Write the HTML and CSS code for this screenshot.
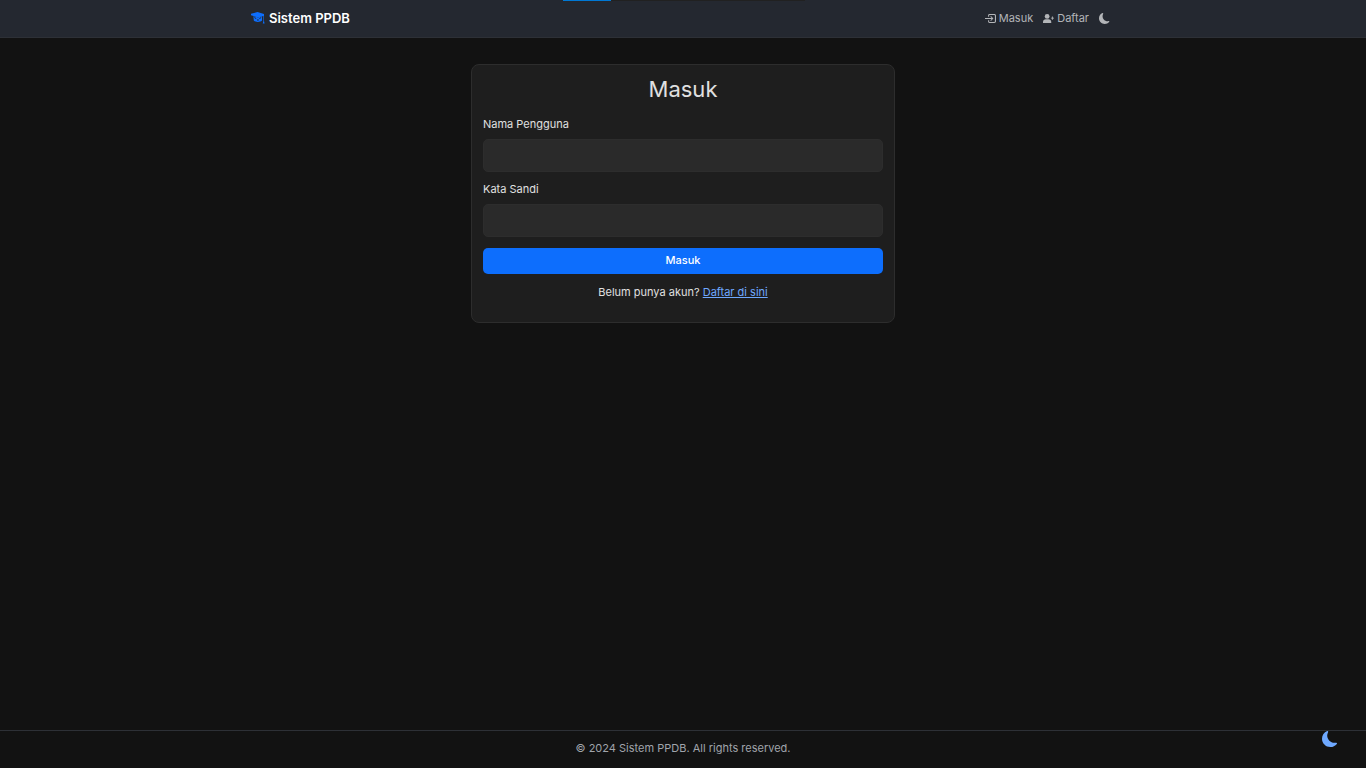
FILE: index.html
```html
<!DOCTYPE html>
<html lang="id">
<head>
<meta charset="utf-8">
<meta name="viewport" content="width=device-width, initial-scale=1">
<title>Masuk - Sistem PPDB</title>
<link rel="stylesheet" href="styles.css">
</head>
<body>
<div class="progress"><div class="progress-bar"></div></div>
<header class="navbar">
  <div class="container">
    <a class="brand" href="#">
      <svg class="brand-icon" viewBox="0 0 14 12" aria-hidden="true"><path d="M6.500 0 13 2V9l.6 2.500h-1.800L12.400 9V4L7 5.500 0 3.200V1.800Z"/><path d="M2.400 4.200 7 5.500l4-1.300v4.400C10 9.600 8.500 10 6.800 10S3.400 9.600 2.800 8.600Z"/><path class="cut" d="M3.400 5.600 5.200 6.500M10.200 5.600 8.400 6.500M6 8h1.800"/></svg>
      <span>Sistem PPDB</span>
    </a>
    <nav class="nav">
      <a class="nav-link" href="#">
        <svg class="nav-icon" viewBox="0 0 16 16" aria-hidden="true"><path d="M6 3.500a.5.5 0 0 1 .5-.5h7a.9.900 0 0 1 .9.900v8.200a.9.900 0 0 1-.9.900h-7a.5.5 0 0 1-.5-.5v-2H4.500v2c0 1 .9 2 2 2h7c1.500 0 2.500-1.100 2.500-2.500V4C16 2.500 15 1.500 13.500 1.500h-7c-1.100 0-2 .9-2 2v2H6Z"/><path d="M11.900 8.400a.5.5 0 0 0 0-.8L8.700 4.300l-1 1 2 2H0v1.400h9.700l-2 2 1 1Z"/></svg>
        <span>Masuk</span>
      </a>
      <a class="nav-link" href="#">
        <svg class="nav-icon" viewBox="0 0 16 16" aria-hidden="true"><path d="M0 14.500v-1.500c0-2.500 1.800-4 4-4h4c2.200 0 4 1.500 4 4v1.500Z"/><circle cx="6" cy="5" r="3.500"/><path d="M13 5.200h1.300v1.600H16v1.300h-1.700v1.700H13V8.100h-1.500V6.800H13Z"/></svg>
        <span>Daftar</span>
      </a>
      <button class="icon-button" type="button" aria-label="Ganti tema">
        <svg class="nav-icon" viewBox="0 0 16 16" aria-hidden="true"><path d="M6 .278a.77.770 0 0 1 .08.858 7.200 7.200 0 0 0-.878 3.460c0 4.021 3.278 7.277 7.318 7.277q.792-.001 1.533-.16a.79.790 0 0 1 .81.316.73.730 0 0 1-.031.893A8.350 8.350 0 0 1 8.344 16C3.734 16 0 12.286 0 7.710 0 4.266 2.114 1.312 5.124.060A.75.750 0 0 1 6 .278"/></svg>
      </button>
    </nav>
  </div>
</header>
<main class="main">
  <section class="card">
    <h1 class="title">Masuk</h1>
    <form class="form">
      <label class="label" for="username">Nama Pengguna</label>
      <input class="input" id="username" name="username" type="text">
      <label class="label" for="password">Kata Sandi</label>
      <input class="input" id="password" name="password" type="password">
      <button class="submit" type="submit">Masuk</button>
    </form>
    <p class="register">Belum punya akun? <a class="link" href="#">Daftar di sini</a></p>
  </section>
</main>
<footer class="footer">© 2024 Sistem PPDB. All rights reserved.</footer>
<button class="theme-toggle" type="button" aria-label="Mode gelap">
  <svg class="theme-icon" viewBox="0 0 16 16" aria-hidden="true"><path d="M6 .278a.77.770 0 0 1 .08.858 7.200 7.200 0 0 0-.878 3.460c0 4.021 3.278 7.277 7.318 7.277q.792-.001 1.533-.16a.79.790 0 0 1 .81.316.73.730 0 0 1-.031.893A8.350 8.350 0 0 1 8.344 16C3.734 16 0 12.286 0 7.710 0 4.266 2.114 1.312 5.124.060A.75.750 0 0 1 6 .278"/></svg>
</button>
</body>
</html>
```
FILE: styles.css
```css
* { box-sizing: border-box; }

body {
  margin: 0;
  min-height: 100vh;
  display: flex;
  flex-direction: column;
  background: #121212;
  color: #e0e0e0;
  font: 11px/16px Inter, "Liberation Sans", sans-serif;
}

svg { display: block; fill: currentColor; }
button { border: 0; padding: 0; background: none; color: inherit; font: inherit; cursor: pointer; }

.progress {
  position: absolute;
  top: 0;
  left: 50%;
  width: 242px;
  height: 1px;
  margin-left: -120px;
  background: #212121;
}
.progress-bar { width: 20%; height: 1px; background: #0078d4; }

.navbar { background: #242830; border-bottom: 1px solid #2d3036; }
.container {
  display: flex;
  align-items: center;
  justify-content: space-between;
  max-width: 884px;
  height: 37px;
  margin: 0 auto;
  padding: 0 15px 1px 10px;
}
.brand {
  display: flex;
  align-items: center;
  gap: 4px;
  color: #fff;
  font-size: 13px;
  font-weight: 600;
  text-decoration: none;
}
.brand-icon { width: 14px; height: 12px; color: #0d6efd; }
.cut { fill: none; stroke: #242830; stroke-width: 1; }
.nav { display: flex; align-items: center; gap: 10px; color: #b3b5b8; }
.nav-link { display: flex; align-items: center; gap: 3px; color: inherit; text-decoration: none; }
.nav-icon { width: 11px; height: 11px; }

.main { flex: 1; padding: 26px 11px; }
.card {
  max-width: 424px;
  margin: 0 auto;
  padding: 11px 11px 22px;
  background: #1e1e1e;
  border: 1px solid #2d2d2d;
  border-radius: 8px;
}
.title { margin: 0 0 14px; font-size: 22px; line-height: 26px; font-weight: 400; text-align: center; }
.form { display: flex; flex-direction: column; }
.label { margin-bottom: 7px; }
.input {
  height: 33px;
  margin-bottom: 9px;
  padding: 0 8px;
  background: #2a2a2a;
  border: 1px solid #2d2d2d;
  border-radius: 5px;
  color: inherit;
  font: inherit;
}
.submit {
  height: 26px;
  margin-top: 2px;
  padding-bottom: 2px;
  border-radius: 5px;
  background: #0d6efd;
  color: #fff;
  font-weight: 500;
}
.register { margin: 10px 0 0; text-align: center; }
.link { color: #6ea8fe; }

.footer { padding: 9px 11px 12px; border-top: 1px solid #2d3036; color: #a0a4ab; text-align: center; }

.theme-toggle { position: fixed; right: 28px; bottom: 21px; color: #6ea8fe; }
.theme-icon { width: 16px; height: 16px; }
```
